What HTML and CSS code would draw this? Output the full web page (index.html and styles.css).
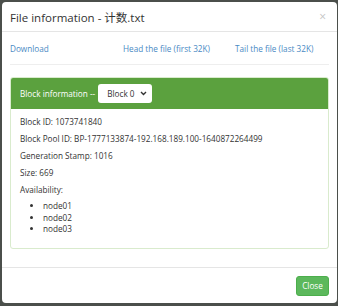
FILE: index.html
```html
<!DOCTYPE html>
<html>
  <head>
    <title>File information</title>
    <link rel="stylesheet" href="styles.css">
  </head>
  <body>
    <div class="modal">
      <div class="modal-header">
        <h4 class="modal-title">File information - 计数.txt</h4>
        <span class="close">&times;</span>
      </div>

      <div class="modal-body">
        <div class="file-links">
          <a href="#">Download</a>
          <a href="#">Head the file (first 32K)</a>
          <a href="#">Tail the file (last 32K)</a>
        </div>

        <div class="panel">
          <div class="panel-heading">
            <span>Block information --</span>
            <div class="block-select">
              <span>Block 0</span>
              <svg width="7" height="5" viewBox="0 0 7 5">
                <path d="M1 1 L3.5 3.5 L6 1" fill="none" stroke="#333" stroke-width="1.4" />
              </svg>
            </div>
          </div>
          <div class="panel-body">
            <p>Block ID: 1073741840</p>
            <p>Block Pool ID: BP-1777133874-192.168.189.100-1640872264499</p>
            <p>Generation Stamp: 1016</p>
            <p>Size: 669</p>
            <p>Availability:</p>
            <ul>
              <li>node01</li>
              <li>node02</li>
              <li>node03</li>
            </ul>
          </div>
        </div>
      </div>

      <div class="modal-footer">
        <button class="btn-close">Close</button>
      </div>
    </div>
  </body>
</html>
```

FILE: styles.css
```css
body {
  margin: 0;
  background: #4b4f4b;
  font-family: "Open Sans", "Noto Sans CJK SC", sans-serif;
  font-size: 8.2px;
  color: #333;
}

.modal {
  margin: 2px 1px 0 2px;
  height: 301px;
  background: #fff;
  border-radius: 4px;
  display: flex;
  flex-direction: column;
}

.modal-header {
  height: 30px;
  padding: 0 8px;
  border-bottom: 1px solid #e5e5e5;
  display: flex;
  align-items: center;
  justify-content: space-between;
  box-sizing: border-box;
}

.modal-title {
  margin: 0;
  font-size: 11.5px;
  font-weight: normal;
}

.close {
  color: #c4c4c4;
  font-size: 12px;
  margin-right: 3px;
}

.modal-body {
  padding: 0 8px;
  flex: 1;
}

.file-links {
  height: 32px;
  display: grid;
  grid-template-columns: 113px 112px 1fr;
  align-items: center;
  border-bottom: 1px solid #eee;
}

.file-links a {
  color: #4a8ac4;
  text-decoration: none;
}

.panel {
  margin-top: 12px;
  border: 1px solid #d9ebcd;
  border-radius: 3px;
}

.panel-heading {
  height: 31px;
  background: #5ba13e;
  color: #fff;
  padding: 0 9px;
  display: flex;
  align-items: center;
  gap: 3px;
  border-radius: 2px 2px 0 0;
}

.block-select {
  width: 54px;
  height: 19px;
  box-sizing: border-box;
  background: #fff;
  color: #333;
  border-radius: 3px;
  display: flex;
  align-items: center;
  justify-content: space-between;
  padding: 0 5px 0 9px;
}

.panel-body {
  padding: 4px 9px 13px;
}

.panel-body p {
  margin: 0;
  line-height: 17px;
}

.panel-body ul {
  margin: 2px 0 0;
  padding-left: 23px;
}

.panel-body li {
  line-height: 11.7px;
}

.modal-footer {
  height: 35px;
  border-top: 1px solid #e5e5e5;
  display: flex;
  justify-content: flex-end;
  align-items: center;
  padding: 0 8px;
}

.btn-close {
  width: 33px;
  height: 20px;
  padding: 0;
  border: 1px solid #4cae4c;
  border-radius: 3px;
  background: #5cb85c;
  color: #fff;
  font-family: inherit;
  font-size: 8.2px;
}
```
